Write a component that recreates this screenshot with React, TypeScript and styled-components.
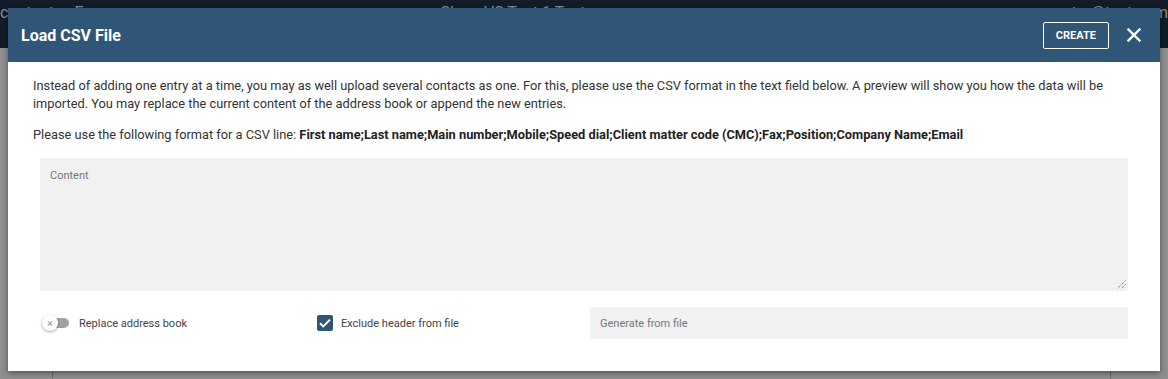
import styled, { createGlobalStyle } from "styled-components";

const GlobalStyle = createGlobalStyle`
    * {
        box-sizing: border-box;
    }
    html, body {
        margin: 0;
        padding: 0;
        background: #5b5b5b;
        font-family: Roboto, "Liberation Sans", sans-serif;
    }
`;

const FORMAT =
    "First name;Last name;Main number;Mobile;Speed dial;Client matter code (CMC);Fax;Position;Company Name;Email";

const App = () => {
    return (
        <>
            <GlobalStyle />
            <Page>
                <AppBar>
                    <AppBarText>contacts - Exp</AppBarText>
                    <AppBarText>Show VS Test 1 Test</AppBarText>
                    <AppBarText>max.muster@test.com</AppBarText>
                </AppBar>
                <AppBody>
                    <AppColumn />
                    <AppColumn />
                </AppBody>
                <Modal>
                    <Header>
                        <Title>Load CSV File</Title>
                        <HeaderActions>
                            <CreateButton>Create</CreateButton>
                            <CloseButton aria-label="Close">
                                <svg width="14" height="14" viewBox="0 0 14 14">
                                    <path
                                        d="M1.5 1.5 L12.5 12.5 M12.5 1.5 L1.5 12.5"
                                        stroke="#fff"
                                        strokeWidth="2.4"
                                        strokeLinecap="square"
                                    />
                                </svg>
                            </CloseButton>
                        </HeaderActions>
                    </Header>
                    <Body>
                        <Paragraph>
                            Instead of adding one entry at a time, you may as well upload several
                            contacts as one. For this, please use the CSV format in the text field
                            below. A preview will show you how the data will be imported. You may
                            replace the current content of the address book or append the new
                            entries.
                        </Paragraph>
                        <Paragraph $gap>
                            Please use the following format for a CSV line: <b>{FORMAT}</b>
                        </Paragraph>
                        <ContentField>
                            <FieldLabel>Content</FieldLabel>
                            <ResizeHandle width="9" height="9" viewBox="0 0 9 9">
                                <path
                                    d="M8.5 0.5 L0.5 8.5 M8.5 4.5 L4.5 8.5"
                                    stroke="#555"
                                    strokeWidth="1"
                                    strokeDasharray="1 1"
                                />
                            </ResizeHandle>
                        </ContentField>
                        <OptionsRow>
                            <Option>
                                <Switch>
                                    <SwitchTrack />
                                    <SwitchKnob>×</SwitchKnob>
                                </Switch>
                                <OptionLabel>Replace address book</OptionLabel>
                            </Option>
                            <Option>
                                <Checkbox>
                                    <svg width="12" height="10" viewBox="0 0 12 10">
                                        <path
                                            d="M1 5.2 L4.3 8.4 L11 1.6"
                                            fill="none"
                                            stroke="#fff"
                                            strokeWidth="2"
                                        />
                                    </svg>
                                </Checkbox>
                                <OptionLabel>Exclude header from file</OptionLabel>
                            </Option>
                            <FileInput>Generate from file</FileInput>
                        </OptionsRow>
                    </Body>
                </Modal>
            </Page>
        </>
    );
};

const Page = styled.div`
    position: relative;
    width: 1168px;
    height: 379px;
    overflow: hidden;
    display: flex;
    flex-direction: column;
    background: #5b5b5b;
`;

const AppBar = styled.div`
    display: flex;
    justify-content: space-between;
    align-items: flex-start;
    height: 48px;
    padding: 4px 0 0 0;
    background: #121d29;
`;

const AppBarText = styled.span`
    font-size: 16px;
    line-height: 18px;
    color: #8a8f96;
    &:nth-child(2) {
        margin-right: 80px;
    }
`;

const AppBody = styled.div`
    flex: 1;
    display: flex;
    align-items: stretch;
    background: #8f8f8f;
`;

const AppColumn = styled.div`
    width: 53px;
    border-right: 1px solid #6e6e6e;
    &:last-child {
        margin-left: auto;
        width: 58px;
        border-right: none;
        border-left: 1px solid #6e6e6e;
    }
`;

const Modal = styled.div`
    position: absolute;
    top: 8px;
    left: 8px;
    width: 1152px;
    height: 363px;
    display: flex;
    flex-direction: column;
    background: #fff;
    box-shadow: 0 2px 6px rgba(0, 0, 0, 0.45);
`;

const Header = styled.div`
    display: flex;
    align-items: center;
    justify-content: space-between;
    height: 54px;
    padding: 0 19px 0 13px;
    background: #2f5577;
`;

const Title = styled.h1`
    margin: 0;
    font-size: 16px;
    font-weight: 700;
    color: #fff;
`;

const HeaderActions = styled.div`
    display: flex;
    align-items: center;
    gap: 18px;
`;

const CreateButton = styled.button`
    height: 27px;
    padding: 0 12px;
    border: 1px solid #fff;
    border-radius: 2px;
    background: transparent;
    color: #fff;
    font-family: Roboto, "Liberation Sans", sans-serif;
    font-size: 11px;
    font-weight: 700;
    text-transform: uppercase;
    cursor: pointer;
`;

const CloseButton = styled.button`
    display: flex;
    padding: 0;
    border: none;
    background: transparent;
    cursor: pointer;
`;

const Body = styled.div`
    display: flex;
    flex-direction: column;
    padding: 15px 25px 32px 25px;
`;

const Paragraph = styled.p<{ $gap?: boolean }>`
    margin: ${({ $gap }) => ($gap ? "13px 0 0" : "0")};
    font-size: 12.8px;
    line-height: 18px;
    color: #333;
    b {
        font-weight: 700;
        color: #222;
    }
`;

const ContentField = styled.div`
    position: relative;
    height: 133px;
    margin: 14px 7px 0;
    padding: 6px 10px;
    border-radius: 3px;
    background: #f1f1f1;
`;

const FieldLabel = styled.span`
    font-size: 11px;
    color: #777;
`;

const ResizeHandle = styled.svg`
    position: absolute;
    right: 2px;
    bottom: 2px;
`;

const OptionsRow = styled.div`
    display: grid;
    grid-template-columns: 277px 273px 1fr;
    align-items: center;
    margin: 16px 7px 0;
`;

const Option = styled.div`
    display: flex;
    align-items: center;
    gap: 8px;
`;

const OptionLabel = styled.span`
    font-size: 11px;
    color: #444;
`;

const Switch = styled.div`
    position: relative;
    width: 29px;
    height: 16px;
    margin-left: 2px;
`;

const SwitchTrack = styled.div`
    position: absolute;
    top: 3px;
    left: 6px;
    width: 21px;
    height: 10px;
    border-radius: 5px;
    background: #a2a2a6;
`;

const SwitchKnob = styled.div`
    position: absolute;
    top: 0;
    left: 0;
    width: 16px;
    height: 16px;
    display: flex;
    align-items: center;
    justify-content: center;
    border-radius: 50%;
    background: #fff;
    box-shadow: 0 1px 3px rgba(0, 0, 0, 0.35);
    font-size: 11px;
    line-height: 1;
    color: #999;
`;

const Checkbox = styled.div`
    display: flex;
    align-items: center;
    justify-content: center;
    width: 16px;
    height: 16px;
    border-radius: 2px;
    background: #2f5577;
`;

const FileInput = styled.div`
    display: flex;
    align-items: center;
    height: 32px;
    padding: 0 10px;
    background: #f1f1f1;
    font-size: 11px;
    color: #777;
`;

export default App;
